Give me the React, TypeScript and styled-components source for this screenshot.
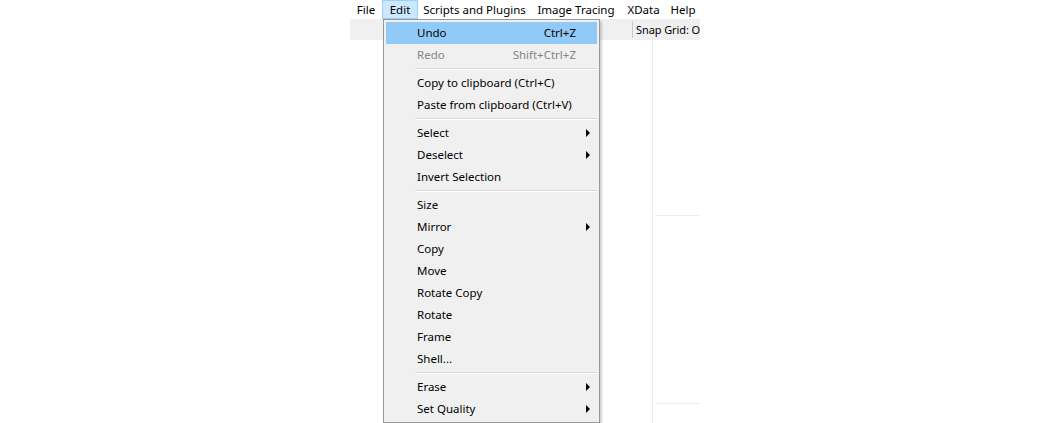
import React from "react";
import styled, { createGlobalStyle } from "styled-components";

const Global = createGlobalStyle`
  html, body { margin: 0; padding: 0; background: #ffffff; }
  body { font-family: "Noto Sans", "Open Sans", Arial, sans-serif; font-size: 11.5px; color: #000; }
  #root { width: 1050px; height: 423px; overflow: hidden; }
`;

const Page = styled.div`
  width: 1050px;
  height: 423px;
  display: flex;
  justify-content: center;
  overflow: hidden;
`;

const Window = styled.div`
  width: 350px;
  height: 423px;
  display: flex;
  flex-direction: column;
  position: relative;
`;

const MenuBar = styled.div`
  height: 19px;
  display: flex;
  align-items: stretch;
  background: #ffffff;
`;

const BarItem = styled.div<{ $w: number; $open?: boolean }>`
  position: relative;
  width: ${(p) => p.$w}px;
  box-sizing: border-box;
  display: flex;
  align-items: center;
  justify-content: center;
  line-height: 17px;
  background: ${(p) => (p.$open ? "#cce8ff" : "transparent")};
  border: 1px solid ${(p) => (p.$open ? "#99d1ff" : "transparent")};
  white-space: nowrap;
`;

const Toolbar = styled.div`
  height: 21px;
  background: #f0f0f0;
  display: flex;
  align-items: center;
  justify-content: flex-end;
  overflow: hidden;
`;

const ToolSep = styled.div`
  width: 1px;
  height: 17px;
  background: #c8c8c8;
  margin-right: 3px;
`;

const ToolText = styled.div`
  width: 64px;
  white-space: nowrap;
  overflow: hidden;
  padding-bottom: 1px;
  font-size: 11px;
  letter-spacing: -0.1px;
`;

const Body = styled.div`
  flex: 1;
  display: flex;
`;

const Canvas = styled.div`
  flex: 1;
  background: #ffffff;
`;

const SidePanel = styled.div`
  width: 47px;
  border-left: 1px solid #ececec;
  display: flex;
  flex-direction: column;
`;

const PanelSection = styled.div<{ $h: number }>`
  height: ${(p) => p.$h}px;
  border-bottom: 1px solid #ececec;
  margin-left: 2px;
`;

const Dropdown = styled.div`
  position: absolute;
  top: 18px;
  left: 0px;
  width: 217px;
  box-sizing: border-box;
  background: #f0f0f0;
  border: 1px solid #979797;
  padding: 2px;
  box-shadow: 2px 2px 2px rgba(0, 0, 0, 0.18);
  z-index: 10;
  text-align: left;
`;

const Row = styled.div<{ $hot?: boolean; $disabled?: boolean }>`
  height: 22px;
  display: flex;
  align-items: center;
  box-sizing: border-box;
  padding: 0 21px 2px 31px;
  background: ${(p) => (p.$hot ? "#91c9f7" : "transparent")};
  color: ${(p) => (p.$disabled ? "#858585" : "#000000")};
  position: relative;
`;

const Label = styled.span`
  flex: 1;
  white-space: nowrap;
`;

const Shortcut = styled.span`
  white-space: nowrap;
`;

const Arrow = styled.span`
  position: absolute;
  right: 7px;
  top: 7px;
  width: 0;
  height: 0;
  border-top: 4px solid transparent;
  border-bottom: 4px solid transparent;
  border-left: 4px solid #000;
`;

const Separator = styled.div`
  height: 6px;
  display: flex;
  align-items: center;
  padding-left: 29px;
`;

const SepLine = styled.div`
  flex: 1;
  height: 1px;
  background: #d7d7d7;
  border-bottom: 1px solid #ffffff;
`;

type Item =
  | { sep: true }
  | { label: string; shortcut?: string; sub?: boolean; hot?: boolean; disabled?: boolean };

const items: Item[] = [
  { label: "Undo", shortcut: "Ctrl+Z", hot: true },
  { label: "Redo", shortcut: "Shift+Ctrl+Z", disabled: true },
  { sep: true },
  { label: "Copy to clipboard (Ctrl+C)" },
  { label: "Paste from clipboard (Ctrl+V)" },
  { sep: true },
  { label: "Select", sub: true },
  { label: "Deselect", sub: true },
  { label: "Invert Selection" },
  { sep: true },
  { label: "Size" },
  { label: "Mirror", sub: true },
  { label: "Copy" },
  { label: "Move" },
  { label: "Rotate Copy" },
  { label: "Rotate" },
  { label: "Frame" },
  { label: "Shell..." },
  { sep: true },
  { label: "Erase", sub: true },
  { label: "Set Quality", sub: true },
];

const bar = [
  { label: "File", w: 32 },
  { label: "Edit", w: 36, open: true },
  { label: "Scripts and Plugins", w: 113 },
  { label: "Image Tracing", w: 90 },
  { label: "XData", w: 45 },
  { label: "Help", w: 34 },
];

export default function App() {
  return (
    <Page>
      <Global />
      <Window>
        <MenuBar>
          {bar.map((b) => (
            <BarItem key={b.label} $w={b.w} $open={b.open}>
              {b.label}
              {b.open && (
                <Dropdown>
                  {items.map((it, i) =>
                    "sep" in it ? (
                      <Separator key={i}>
                        <SepLine />
                      </Separator>
                    ) : (
                      <Row key={i} $hot={it.hot} $disabled={it.disabled}>
                        <Label>{it.label}</Label>
                        {it.shortcut && <Shortcut>{it.shortcut}</Shortcut>}
                        {it.sub && <Arrow />}
                      </Row>
                    )
                  )}
                </Dropdown>
              )}
            </BarItem>
          ))}
        </MenuBar>
        <Toolbar>
          <ToolSep />
          <ToolText>Snap Grid: Off</ToolText>
        </Toolbar>
        <Body>
          <Canvas />
          <SidePanel>
            <PanelSection $h={175} />
            <PanelSection $h={187} />
          </SidePanel>
        </Body>
      </Window>
    </Page>
  );
}
